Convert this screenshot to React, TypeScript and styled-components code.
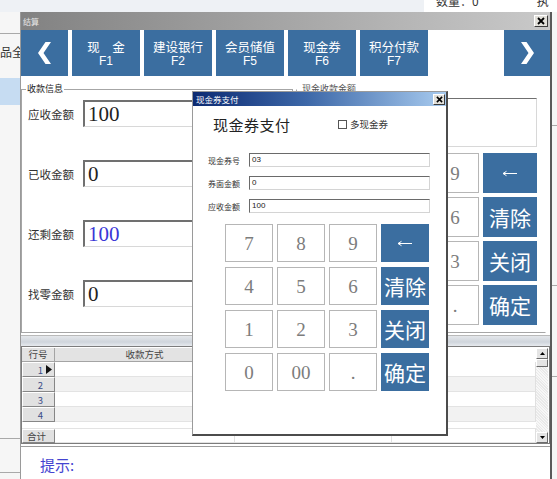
import React from "react";
import styled, { createGlobalStyle } from "styled-components";

const CJK = `"Noto Sans CJK SC", "Noto Sans", sans-serif`;
const SERIF = `"Liberation Serif", "DejaVu Serif", "Noto Sans CJK SC", serif`;
const SANS = `"Liberation Sans", "Noto Sans CJK SC", sans-serif`;
const BLUE = "#3b6ea0";

const GlobalStyle = createGlobalStyle`
  html, body { margin: 0; padding: 0; }
  body { font-family: ${CJK}; background: #eef1f5; }
  * { box-sizing: border-box; }
`;

/* ---------- desktop / background app ---------- */
const Desktop = styled.div`
  position: relative;
  width: 557px;
  height: 479px;
  overflow: hidden;
  background: #eef1f5;
  display: flex;
  flex-direction: column;
`;

const TopStrip = styled.div`
  height: 12px;
  display: flex;
  justify-content: flex-end;
`;

const TopInfo = styled.div`
  width: 133px;
  background: #fff;
  overflow: hidden;
  display: flex;
  gap: 58px;
  padding-left: 12px;
  font-size: 12px;
  line-height: 12px;
  color: #333;
`;

const TopInfoText = styled.span`
  margin-top: -5px;
  white-space: nowrap;
`;

const BackBody = styled.div`
  flex: 1;
  display: flex;
  justify-content: space-between;
`;

const LeftPane = styled.div`
  width: 20px;
  display: flex;
  flex-direction: column;
  background: #f6f6f6;
`;

const PaneLine = styled.div<{ $top: number }>`
  margin-top: ${(p) => p.$top}px;
  height: 1px;
  background: #a9a9a9;
`;

const BackText = styled.div`
  margin-top: 12px;
  font-size: 12px;
  line-height: 12px;
  color: #333;
  white-space: nowrap;
`;

const Highlight = styled.div`
  margin-top: 20px;
  height: 27px;
  background: #c6dcf2;
`;

const RightPane = styled.div`
  width: 5px;
  display: flex;
  flex-direction: column;
  background: #f6f6f6;
`;

/* ---------- settlement window ---------- */
const Window = styled.div`
  position: absolute;
  left: 20px;
  top: 12px;
  width: 532px;
  height: 472px;
  background: #fff;
  border-left: 1px solid #9a9a9a;
  border-right: 2px solid #5a5a5a;
  display: flex;
  flex-direction: column;
`;

const WinTitleBar = styled.div`
  height: 18px;
  background: linear-gradient(to right, #828282, #c9c9c9);
  display: flex;
  align-items: center;
  justify-content: space-between;
  padding: 0 2px 0 2px;
`;

const WinTitle = styled.span`
  font-size: 8px;
  color: #e6e6e6;
`;

const CloseBtn = styled.div<{ $w: number; $h: number }>`
  width: ${(p) => p.$w}px;
  height: ${(p) => p.$h}px;
  background: #e2e0da;
  border: 1px solid;
  border-color: #fff #3c3c3c #3c3c3c #fff;
  display: flex;
  align-items: center;
  justify-content: center;
`;

const ButtonRow = styled.div`
  height: 46px;
  display: flex;
  gap: 4px;
`;

const PayButton = styled.div<{ $w: number }>`
  width: ${(p) => p.$w}px;
  background: ${BLUE};
  color: #fff;
  display: flex;
  flex-direction: column;
  align-items: center;
  justify-content: center;
`;

const PayName = styled.span`
  font-size: 12.5px;
  line-height: 15px;
  white-space: pre;
`;

const PayKey = styled.span`
  font-family: ${SANS};
  font-size: 12px;
  line-height: 12px;
  margin-top: 1px;
`;

const RowSpacer = styled.div`
  flex: 1;
`;

const Body = styled.div`
  height: 259px;
  display: flex;
  gap: 3px;
  padding: 7px 4px 2px 0;
`;

const Group = styled.fieldset<{ $w?: number; $open?: boolean }>`
  margin: 0;
  ${(p) => (p.$w ? `width: ${p.$w}px;` : "flex: 1;")}
  border: 1px solid #a6a6a6;
  ${(p) => (p.$open ? "border-top-color: transparent; border-right-color: transparent;" : "")}
  padding: 0;
  display: flex;
  flex-direction: column;
  min-width: 0;
`;

const Legend = styled.legend<{ $faint?: boolean }>`
  font-size: 9px;
  line-height: 12px;
  color: ${(p) => (p.$faint ? "#555" : "#222")};
  padding: 0 1px;
  margin-left: 4px;
`;

const AmountList = styled.div`
  display: grid;
  grid-template-columns: 55px 1fr;
  row-gap: 33px;
  align-items: center;
  padding: 5px 0 0 6px;
`;

const AmountLabel = styled.span`
  font-size: 11.5px;
  color: #333;
`;

const AmountBox = styled.div<{ $blue?: boolean }>`
  height: 27px;
  border-top: 2px solid #707070;
  border-left: 2px solid #707070;
  border-bottom: 1px solid #d8d8d8;
  border-right: 1px solid #d8d8d8;
  font-family: ${SERIF};
  font-size: 21px;
  line-height: 24px;
  padding-left: 3px;
  color: ${(p) => (p.$blue ? "#3a36d6" : "#222")};
`;

const MemoBox = styled.div`
  margin: 3px 8px 0 0;
  height: 49px;
  border-top: 1px solid #707070;
  border-left: 1px solid #707070;
  border-bottom: 1px solid #d8d8d8;
  border-right: 1px solid #d8d8d8;
  background: #fff;
`;

const Keypad = styled.div<{ $cols: string; $rowH: number; $rowGap: number }>`
  display: grid;
  grid-template-columns: ${(p) => p.$cols};
  grid-auto-rows: ${(p) => p.$rowH}px;
  column-gap: 4px;
  row-gap: ${(p) => p.$rowGap}px;
`;

const BackKeypad = styled(Keypad)`
  align-self: flex-end;
  margin: 6px 8px 0 0;
`;

const Key = styled.div<{ $action?: boolean }>`
  display: flex;
  align-items: center;
  justify-content: center;
  background: ${(p) => (p.$action ? BLUE : "#fff")};
  border: 1px solid ${(p) => (p.$action ? BLUE : "#b6b6b6")};
  color: ${(p) => (p.$action ? "#fff" : "#7c7c7c")};
  font-family: ${(p) => (p.$action ? CJK : SERIF)};
  font-size: ${(p) => (p.$action ? 21 : 19)}px;
  line-height: 1;
`;

const Splitter = styled.div`
  height: 11px;
  border-top: 1px solid #b9b9b9;
  background: linear-gradient(#e4e7eb, #cfd5dc 60%, #e7eaee);
`;

/* ---------- grid ---------- */
const GridFrame = styled.div`
  height: 98px;
  border: 1px solid #7c7c7c;
  display: flex;
  background: #fff;
`;

const Table = styled.div`
  flex: 1;
  display: flex;
  flex-direction: column;
  padding-top: 1px;
`;

const Row = styled.div<{ $h: number }>`
  height: ${(p) => p.$h}px;
  display: flex;
`;

const HeadCell = styled.div<{ $w: number }>`
  width: ${(p) => p.$w}px;
  background: #e3e3e3;
  border-right: 1px solid #a4a4a4;
  border-bottom: 1px solid #a4a4a4;
  font-size: 9.5px;
  line-height: 13px;
  color: #444;
  text-align: center;
`;

const RowHead = styled.div<{ $left?: boolean }>`
  width: 33px;
  background: #e1e1e1;
  border: 1px solid;
  border-color: #fff #868686 #868686 #fff;
  display: flex;
  align-items: center;
  justify-content: ${(p) => (p.$left ? "flex-start" : "flex-end")};
  gap: 3px;
  padding: ${(p) => (p.$left ? "0 0 0 4px" : "0 2px 0 0")};
  font-size: 9.5px;
  color: ${(p) => (p.$left ? "#444" : "#3a4c86")};
`;

const Pointer = styled.span<{ $on?: boolean }>`
  width: 6px;
  height: 9px;
  background: ${(p) => (p.$on ? "#111" : "transparent")};
  clip-path: polygon(0 0, 100% 50%, 0 100%);
`;

const Cell = styled.div<{ $w?: number; $alt?: boolean }>`
  ${(p) => (p.$w ? `width: ${p.$w}px;` : "flex: 1;")}
  background: ${(p) => (p.$alt ? "#f2f2f2" : "#fff")};
  border-right: 1px solid #e0e0e0;
  border-bottom: 1px solid #e3e3e3;
`;

const GapRow = styled.div`
  height: 7px;
  border-bottom: 1px solid #e3e3e3;
`;

const Scrollbar = styled.div`
  width: 12px;
  margin: 1px 1px 0 0;
  display: flex;
  flex-direction: column;
`;

const ScrollBtn = styled.div`
  height: 11px;
  background: #e4e4e4;
  border: 1px solid;
  border-color: #fff #6c6c6c #6c6c6c #fff;
  display: flex;
  align-items: center;
  justify-content: center;
`;

const Thumb = styled(ScrollBtn)`
  height: 8px;
`;

const Track = styled.div`
  flex: 1;
  background: repeating-linear-gradient(45deg, #e9e9e9 0 1px, #f7f7f7 1px 2px);
`;

const Hint = styled.div`
  flex: 1;
  margin-top: 2px;
  border-top: 1px solid #9c9c9c;
  padding: 10px 0 0 19px;
  font-size: 15px;
  line-height: 16px;
  color: #4444d0;
`;

/* ---------- coupon dialog ---------- */
const Dialog = styled.div`
  position: absolute;
  left: 192px;
  top: 91px;
  width: 256px;
  height: 345px;
  background: #fff;
  border-top: 1px solid #9a9a9a;
  border-left: 1px solid #9a9a9a;
  border-right: 2px solid #4c4c4c;
  border-bottom: 2px solid #4c4c4c;
  display: flex;
  flex-direction: column;
`;

const DlgTitleBar = styled.div`
  height: 14px;
  background: linear-gradient(to right, #0c2a72, #3d68a8 45%, #a8cbef);
  display: flex;
  align-items: center;
  justify-content: space-between;
  padding: 0 1px 0 3px;
`;

const DlgTitle = styled.span`
  font-size: 8.5px;
  color: #fff;
`;

const HeadingRow = styled.div`
  margin-top: 8px;
  padding-left: 20px;
  height: 20px;
  display: flex;
  align-items: center;
`;

const Heading = styled.span`
  width: 125px;
  font-size: 15px;
  letter-spacing: 0.5px;
  color: #222;
`;

const CheckWrap = styled.label`
  display: flex;
  align-items: center;
  gap: 3px;
  font-size: 9.5px;
  color: #333;
`;

const CheckBox = styled.span`
  width: 9px;
  height: 9px;
  border: 1px solid #555;
  background: #fff;
`;

const FieldList = styled.div`
  margin-top: 19px;
  padding-left: 15px;
  display: grid;
  grid-template-columns: 41px 181px;
  grid-auto-rows: 14px;
  row-gap: 9px;
  align-items: center;
`;

const FieldLabel = styled.span`
  font-size: 8px;
  color: #333;
  white-space: nowrap;
`;

const FieldBox = styled.div`
  height: 14px;
  border-top: 1px solid #6a6a6a;
  border-left: 1px solid #6a6a6a;
  border-bottom: 1px solid #d4d4d4;
  border-right: 1px solid #d4d4d4;
  font-family: ${SANS};
  font-size: 8px;
  line-height: 12px;
  padding-left: 2px;
  color: #222;
`;

const DlgKeypad = styled(Keypad)`
  margin: 11px 0 0 32px;
`;

/* ---------- icons ---------- */
const Chevron = ({ dir }: { dir: "left" | "right" }) => (
  <svg width="13" height="22" viewBox="0 0 13 22">
    <polygon
      fill="#fff"
      points={dir === "left" ? "13,0 7.5,0 0,11 7.5,22 13,22 5.5,11" : "0,0 5.5,0 13,11 5.5,22 0,22 7.5,11"}
    />
  </svg>
);

const XMark = ({ s }: { s: number }) => (
  <svg width={s} height={s} viewBox="0 0 8 8">
    <path d="M1 1 L7 7 M7 1 L1 7" stroke="#000" strokeWidth="1.8" />
  </svg>
);

const BackArrow = () => (
  <svg width="16" height="7" viewBox="0 0 16 7">
    <path d="M1 3.5 H15 M1 3.5 L4.5 1.3 M1 3.5 L4.5 5.7" stroke="#fff" strokeWidth="1" fill="none" />
  </svg>
);

const Tri = ({ up }: { up?: boolean }) => (
  <svg width="5" height="3" viewBox="0 0 5 3">
    <polygon fill="#000" points={up ? "0,3 5,3 2.5,0" : "0,0 5,0 2.5,3"} />
  </svg>
);

type KeyDef = { label: React.ReactNode; action?: boolean };

const keys: KeyDef[] = [
  { label: "7" }, { label: "8" }, { label: "9" }, { label: <BackArrow />, action: true },
  { label: "4" }, { label: "5" }, { label: "6" }, { label: "清除", action: true },
  { label: "1" }, { label: "2" }, { label: "3" }, { label: "关闭", action: true },
  { label: "0" }, { label: "00" }, { label: "." }, { label: "确定", action: true },
];

const payButtons = [
  { name: "现\u3000金", key: "F1", w: 68 },
  { name: "建设银行", key: "F2", w: 68 },
  { name: "会员储值", key: "F5", w: 68 },
  { name: "现金券", key: "F6", w: 68 },
  { name: "积分付款", key: "F7", w: 68 },
];

const amounts = [
  { label: "应收金额", value: "100" },
  { label: "已收金额", value: "0" },
  { label: "还剩金额", value: "100", blue: true },
  { label: "找零金额", value: "0" },
];

const fields = [
  { label: "现金券号", value: "03" },
  { label: "券面金额", value: "0" },
  { label: "应收金额", value: "100" },
];

const gridRows = ["1", "2", "3", "4"];

export default function App() {
  return (
    <>
      <GlobalStyle />
      <Desktop>
        <TopStrip>
          <TopInfo>
            <TopInfoText>数量：0</TopInfoText>
            <TopInfoText>执</TopInfoText>
          </TopInfo>
        </TopStrip>
        <BackBody>
          <LeftPane>
            <PaneLine $top={21} />
            <BackText>品全称</BackText>
            <Highlight />
            <PaneLine $top={333} />
            <PaneLine $top={33} />
          </LeftPane>
          <RightPane>
            <PaneLine $top={113} />
            <PaneLine $top={159} />
            <PaneLine $top={90} />
          </RightPane>
        </BackBody>

        <Window>
          <WinTitleBar>
            <WinTitle>结算</WinTitle>
            <CloseBtn $w={14} $h={12}>
              <XMark s={8} />
            </CloseBtn>
          </WinTitleBar>
          <ButtonRow>
            <PayButton $w={47}>
              <Chevron dir="left" />
            </PayButton>
            {payButtons.map((b) => (
              <PayButton key={b.key} $w={b.w}>
                <PayName>{b.name}</PayName>
                <PayKey>{b.key}</PayKey>
              </PayButton>
            ))}
            <RowSpacer />
            <PayButton $w={46}>
              <Chevron dir="right" />
            </PayButton>
          </ButtonRow>

          <Body>
            <Group $w={272}>
              <Legend>收款信息</Legend>
              <AmountList>
                {amounts.map((a) => (
                  <React.Fragment key={a.label}>
                    <AmountLabel>{a.label}</AmountLabel>
                    <AmountBox $blue={a.blue}>{a.value}</AmountBox>
                  </React.Fragment>
                ))}
              </AmountList>
            </Group>
            <Group $open>
              <Legend $faint>现金收款金额</Legend>
              <MemoBox />
              <BackKeypad $cols="48px 48px 48px 54px" $rowH={40} $rowGap={4}>
                {keys.map((k, i) => (
                  <Key key={i} $action={k.action}>
                    {k.label}
                  </Key>
                ))}
              </BackKeypad>
            </Group>
          </Body>

          <Splitter />

          <GridFrame>
            <Table>
              <Row $h={14}>
                <HeadCell $w={33}>行号</HeadCell>
                <HeadCell $w={180}>收款方式</HeadCell>
                <HeadCell $w={157}>金额</HeadCell>
              </Row>
              {gridRows.map((r, i) => (
                <Row key={r} $h={15}>
                  <RowHead>
                    {r}
                    <Pointer $on={i === 0} />
                  </RowHead>
                  <Cell $w={180} $alt={i % 2 === 1} />
                  <Cell $w={157} $alt={i % 2 === 1} />
                  <Cell $alt={i % 2 === 1} />
                </Row>
              ))}
              <GapRow />
              <Row $h={14}>
                <RowHead $left>合计</RowHead>
                <Cell $w={180} />
                <Cell $w={157} />
                <Cell />
              </Row>
            </Table>
            <Scrollbar>
              <ScrollBtn>
                <Tri up />
              </ScrollBtn>
              <Thumb />
              <Track />
              <ScrollBtn>
                <Tri />
              </ScrollBtn>
            </Scrollbar>
          </GridFrame>

          <Hint>提示:</Hint>
        </Window>

        <Dialog>
          <DlgTitleBar>
            <DlgTitle>现金券支付</DlgTitle>
            <CloseBtn $w={12} $h={11}>
              <XMark s={7} />
            </CloseBtn>
          </DlgTitleBar>
          <HeadingRow>
            <Heading>现金券支付</Heading>
            <CheckWrap>
              <CheckBox />
              多现金券
            </CheckWrap>
          </HeadingRow>
          <FieldList>
            {fields.map((f) => (
              <React.Fragment key={f.label}>
                <FieldLabel>{f.label}</FieldLabel>
                <FieldBox>{f.value}</FieldBox>
              </React.Fragment>
            ))}
          </FieldList>
          <DlgKeypad $cols="repeat(4, 48px)" $rowH={38} $rowGap={5}>
            {keys.map((k, i) => (
              <Key key={i} $action={k.action}>
                {k.label}
              </Key>
            ))}
          </DlgKeypad>
        </Dialog>
      </Desktop>
    </>
  );
}
